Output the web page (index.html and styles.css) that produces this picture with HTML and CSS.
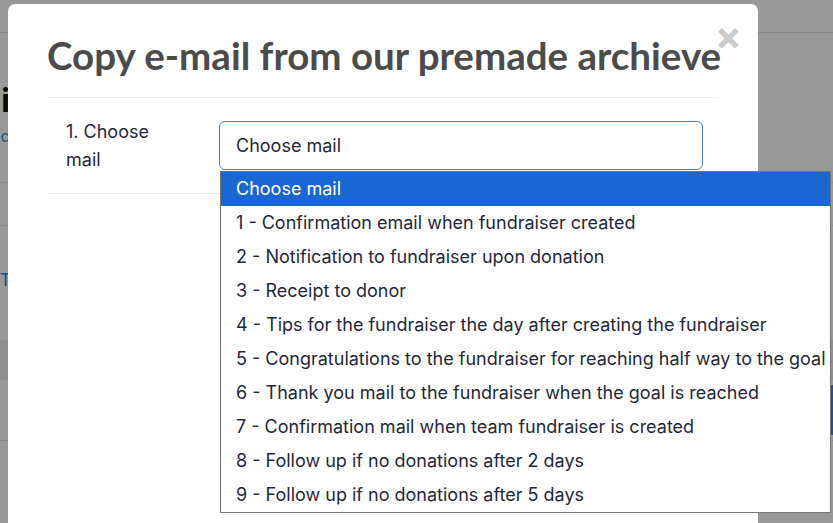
FILE: index.html
```html
<!DOCTYPE html>
<html lang="en">
    <head>
        <meta charset="UTF-8">
        <meta name="viewport" content="width=device-width, initial-scale=1.0">
        <title>Emails</title>
        <link rel="stylesheet" href="styles.css">
    </head>
    <body>

        <!-- Page behind the modal -->
        <div class="page">
            <header class="topbar"></header>
            <main class="page-main">
                <h1 class="page-heading">Emails</h1>
                <a href="#" class="page-sub">Select template</a>
                <div class="tabs"></div>
                <div class="section">
                    <a href="#" class="section-link">Test email</a>
                </div>
                <div class="table-head"></div>
                <div class="table-row">
                    <button class="btn-save">Save</button>
                </div>
            </main>
        </div>

        <!-- Modal -->
        <div class="backdrop"></div>
        <div class="modal">
            <span class="close">&times;</span>
            <h2 class="modal-title">Copy e-mail from our premade archieve</h2>

            <div class="form-row">
                <label class="form-label">1. Choose mail</label>
                <div class="select-wrap">
                    <div class="select">Choose mail</div>

                    <!-- Open list of options -->
                    <ul class="options">
                        <li class="selected">Choose mail</li>
                        <li>1 - Confirmation email when fundraiser created</li>
                        <li>2 - Notification to fundraiser upon donation</li>
                        <li>3 - Receipt to donor</li>
                        <li>4 - Tips for the fundraiser the day after creating the fundraiser</li>
                        <li>5 - Congratulations to the fundraiser for reaching half way to the goal</li>
                        <li>6 - Thank you mail to the fundraiser when the goal is reached</li>
                        <li>7 - Confirmation mail when team fundraiser is created</li>
                        <li>8 - Follow up if no donations after 2 days</li>
                        <li>9 - Follow up if no donations after 5 days</li>
                    </ul>
                </div>
            </div>
        </div>

    </body>
</html>
```

FILE: styles.css
```css
body {
    font-family: Inter, "Liberation Sans", sans-serif;
    background-color: #fff;
    margin: 0;
    padding: 0;
    height: 523px;
    overflow: hidden;
}

/* background page */
.topbar {
    height: 32px;
    border-bottom: 1px solid #e6e6e6;
}

.page-main {
    display: flex;
    flex-direction: column;
    align-items: flex-start;
}

.page-heading {
    margin: 50px 0 0 -66px;
    font-size: 32px;
    line-height: 36px;
    color: #111;
}

.page-sub {
    margin: 8px 0 0 -30px;
    font-size: 15px;
    color: #2f7fe6;
    text-decoration: none;
}

.tabs {
    align-self: stretch;
    height: 42px;
    margin-top: 36px;
    border-top: 1px solid #e6e6e6;
    border-bottom: 1px solid #e6e6e6;
}

.section {
    padding: 44px 0 50px 0;
}

.section-link {
    font-size: 17px;
    color: #2f7fe6;
    text-decoration: none;
}

.table-head {
    align-self: stretch;
    height: 40px;
    background-color: #eee;
}

.table-row {
    align-self: stretch;
    height: 60px;
    border-bottom: 1px solid #e6e6e6;
    display: flex;
    justify-content: flex-end;
    align-items: center;
}

.btn-save {
    margin-right: -60px;
    width: 65px;
    height: 50px;
    border: none;
    border-radius: 4px;
    background-color: #3385ff;
    color: #fff;
}

/* modal */
.backdrop {
    position: fixed;
    inset: 0;
    background-color: rgba(0, 0, 0, 0.4);
}

.modal {
    position: absolute;
    left: 8px;
    top: 4px;
    width: 672px;
    height: 560px;
    padding: 0 39px;
    background-color: #fff;
    border-radius: 7px;
}

.close {
    position: absolute;
    right: 16px;
    top: 12px;
    font-size: 40px;
    line-height: 40px;
    font-weight: bold;
    color: #cbcbcb;
}

.modal-title {
    margin: 0;
    padding: 29px 0 20px 0;
    font-family: Lato, Inter, sans-serif;
    font-size: 38.5px;
    line-height: 44px;
    font-weight: 700;
    white-space: nowrap;
    color: #4b4b4b;
    border-bottom: 1px solid #eceff1;
}

.form-row {
    display: flex;
    padding: 23px 16px 19px 19px;
    border-bottom: 1px solid #eceff1;
}

.form-label {
    width: 110px;
    margin: -3px 43px 0 0;
    flex-shrink: 0;
    font-size: 18px;
    line-height: 28px;
    color: #1f2838;
}

.select-wrap {
    position: relative;
    flex: 1;
}

.select {
    height: 47px;
    padding-left: 16px;
    border: 1px solid #4a86c5;
    border-radius: 6px;
    font-size: 18px;
    line-height: 47px;
    color: #1f2838;
}

.options {
    position: absolute;
    left: 1px;
    top: 50px;
    width: 609px;
    margin: 0;
    padding: 0;
    list-style: none;
    background-color: #fff;
    border: 1px solid #767676;
}

.options li {
    height: 34px;
    padding-left: 15px;
    font-size: 18px;
    line-height: 34px;
    color: #1f2838;
    white-space: nowrap;
}

.options .selected {
    background-color: #1a66d2;
    color: #fff;
}
```
